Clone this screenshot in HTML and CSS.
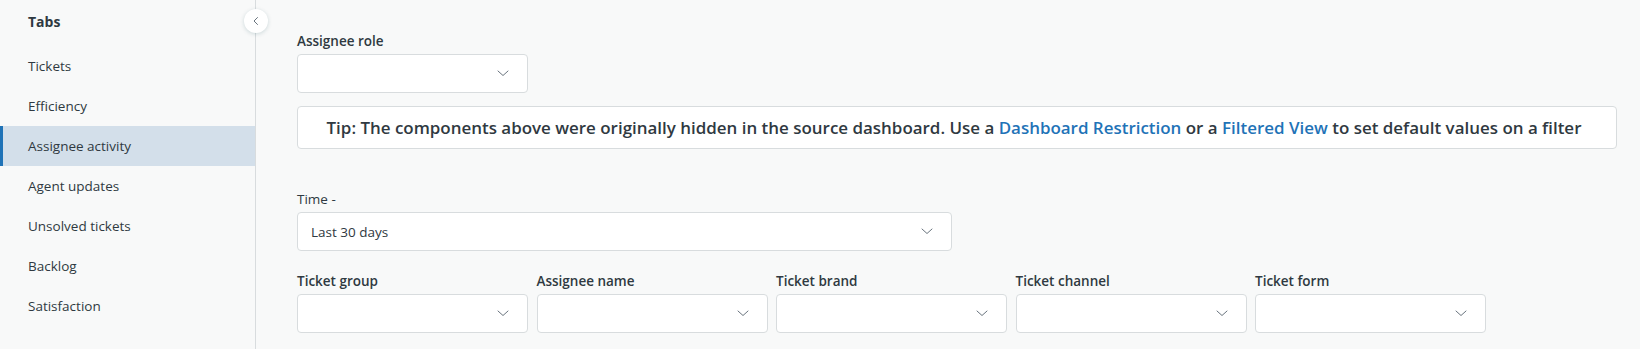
FILE: index.html
```html
<!DOCTYPE html>
<html>
<head>
<meta charset="utf-8">
<link rel="stylesheet" href="styles.css">
</head>
<body>
<div class="app">
  <aside class="sidebar">
    <div class="side-title">Tabs</div>
    <nav class="nav">
      <div class="nav-item">Tickets</div>
      <div class="nav-item">Efficiency</div>
      <div class="nav-item active">Assignee activity</div>
      <div class="nav-item">Agent updates</div>
      <div class="nav-item">Unsolved tickets</div>
      <div class="nav-item">Backlog</div>
      <div class="nav-item">Satisfaction</div>
    </nav>
    <button class="collapse" aria-label="Collapse">
      <svg width="12" height="12" viewBox="0 0 12 12"><path d="M7.5 2.5 L4 6 L7.5 9.5" fill="none" stroke="#68737d" stroke-width="1" stroke-linecap="round" stroke-linejoin="round"/></svg>
    </button>
  </aside>
  <main class="main">
    <div class="field field-role">
      <div class="label">Assignee role</div>
      <div class="select"><span class="value"></span><svg class="chev" width="12" height="7" viewBox="0 0 12 7"><path d="M1 1 L6 5.5 L11 1" fill="none" stroke="#68737d" stroke-width="1" stroke-linecap="round" stroke-linejoin="round"/></svg></div>
    </div>
    <div class="tip"><span class="tip-text">Tip: The components above were originally hidden in the source dashboard. Use a <a class="link">Dashboard Restriction</a> or a <a class="link">Filtered View</a> to set default values on a filter</span></div>
    <div class="field field-time">
      <div class="label label-regular">Time -</div>
      <div class="select"><span class="value">Last 30 days</span><svg class="chev" width="12" height="7" viewBox="0 0 12 7"><path d="M1 1 L6 5.5 L11 1" fill="none" stroke="#68737d" stroke-width="1" stroke-linecap="round" stroke-linejoin="round"/></svg></div>
    </div>
    <div class="filters">
      <div class="field">
        <div class="label">Ticket group</div>
        <div class="select"><span class="value"></span><svg class="chev" width="12" height="7" viewBox="0 0 12 7"><path d="M1 1 L6 5.5 L11 1" fill="none" stroke="#68737d" stroke-width="1" stroke-linecap="round" stroke-linejoin="round"/></svg></div>
      </div>
      <div class="field">
        <div class="label">Assignee name</div>
        <div class="select"><span class="value"></span><svg class="chev" width="12" height="7" viewBox="0 0 12 7"><path d="M1 1 L6 5.5 L11 1" fill="none" stroke="#68737d" stroke-width="1" stroke-linecap="round" stroke-linejoin="round"/></svg></div>
      </div>
      <div class="field">
        <div class="label">Ticket brand</div>
        <div class="select"><span class="value"></span><svg class="chev" width="12" height="7" viewBox="0 0 12 7"><path d="M1 1 L6 5.5 L11 1" fill="none" stroke="#68737d" stroke-width="1" stroke-linecap="round" stroke-linejoin="round"/></svg></div>
      </div>
      <div class="field">
        <div class="label">Ticket channel</div>
        <div class="select"><span class="value"></span><svg class="chev" width="12" height="7" viewBox="0 0 12 7"><path d="M1 1 L6 5.5 L11 1" fill="none" stroke="#68737d" stroke-width="1" stroke-linecap="round" stroke-linejoin="round"/></svg></div>
      </div>
      <div class="field">
        <div class="label">Ticket form</div>
        <div class="select"><span class="value"></span><svg class="chev" width="12" height="7" viewBox="0 0 12 7"><path d="M1 1 L6 5.5 L11 1" fill="none" stroke="#68737d" stroke-width="1" stroke-linecap="round" stroke-linejoin="round"/></svg></div>
      </div>
    </div>
  </main>
</div>
</body>
</html>
```

FILE: styles.css
```css
* { box-sizing: border-box; }
html, body {
  margin: 0;
  padding: 0;
  height: 100%;
  background: #f8f9f9;
  font-family: "Open Sans", "Noto Sans", sans-serif;
  color: #2f3941;
}
.app {
  display: flex;
  height: 349px;
  overflow: hidden;
}
.sidebar {
  position: relative;
  width: 256px;
  flex: 0 0 256px;
  border-right: 1px solid #d8dcde;
  background: #f8f9f9;
}
.side-title {
  padding: 12px 0 0 28px;
  height: 46px;
  font-size: 14px;
  font-weight: 700;
  line-height: 20px;
}
.nav { display: flex; flex-direction: column; }
.nav-item {
  height: 40px;
  line-height: 40px;
  font-size: 13.5px;
  border-left: 3px solid transparent;
  padding-left: 25px;
}
.nav-item.active {
  background: #d3dfea;
  border-left-color: #1f73b7;
}
.collapse {
  position: absolute;
  top: 9px;
  right: -13px;
  width: 24px;
  height: 24px;
  border-radius: 50%;
  border: none;
  background: #fff;
  box-shadow: 0 1px 4px rgba(4, 68, 77, 0.18);
  padding: 0;
  display: flex;
  align-items: center;
  justify-content: center;
  z-index: 2;
}
.main {
  flex: 1;
  padding: 31px 0 0 41px;
}
.field { display: flex; flex-direction: column; }
.label {
  font-size: 13.5px;
  font-weight: 600;
  line-height: 20px;
  margin-bottom: 3px;
}
.label-regular { font-weight: 400; }
.select {
  height: 39px;
  background: #fff;
  border: 1px solid #d8dcde;
  border-radius: 4px;
  display: flex;
  align-items: center;
  justify-content: space-between;
  padding: 0 18px 0 13px;
}
.value { font-size: 13.5px; }
.chev { display: block; }
.field-role { width: 231px; }
.tip {
  margin-top: 13px;
  width: 1320px;
  height: 43px;
  background: #fff;
  border: 1px solid #d8dcde;
  border-radius: 4px;
  display: flex;
  align-items: center;
  justify-content: center;
  font-size: 16.95px;
  font-weight: 600;
  padding-right: 6px;
  white-space: nowrap;
}
.tip .link { color: #1f73b7; }
.field-time { width: 655px; margin-top: 40px; }
.filters {
  display: grid;
  grid-template-columns: repeat(5, 231px);
  column-gap: 8.5px;
  margin-top: 20px;
}
```
